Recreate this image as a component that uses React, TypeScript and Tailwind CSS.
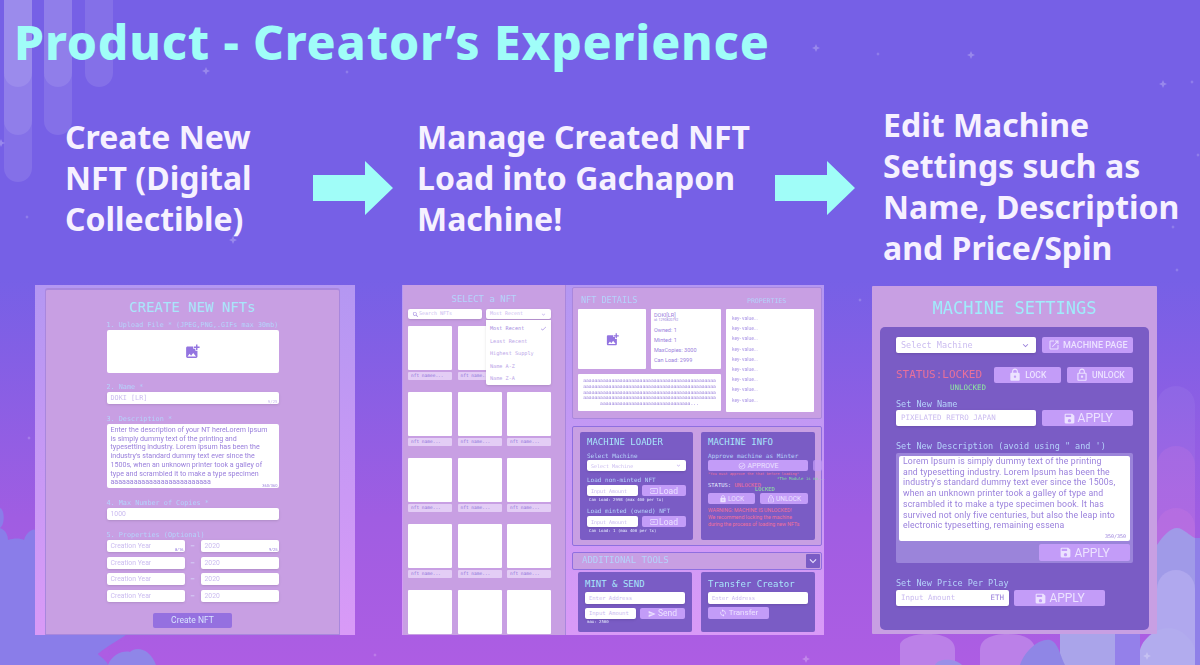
import type { ReactNode } from "react";
import {
  MdAddPhotoAlternate,
  MdCheck,
  MdInput,
  MdKeyboardArrowDown,
  MdLock,
  MdLockOutline,
  MdOutlineCheckCircle,
  MdOutlineOpenInNew,
  MdSave,
  MdSearch,
  MdSend,
  MdSync,
} from "react-icons/md";

const stars: [number, number, number][] = [
  [206, 71, 4], [233, 240, 4], [27, 217, 2], [1, 143, 4], [816, 48, 4], [878, 54, 2],
  [971, 55, 4], [1163, 84, 4], [1192, 82, 2], [1198, 155, 2], [1173, 227, 2], [347, 72, 2],
  [1147, 656, 4], [806, 659, 4], [375, 655, 2], [1177, 270, 2], [860, 300, 2], [29, 438, 2],
];

function Backdrop() {
  return (
    <svg className="absolute inset-0" width="1200" height="665" viewBox="0 0 1200 665">
      <defs>
        <linearGradient id="sky" x1="0" y1="0" x2="0" y2="1">
          <stop offset="0.42" stopColor="#7660e6" />
          <stop offset="0.78" stopColor="#a05de2" />
          <stop offset="1" stopColor="#ad5de3" />
        </linearGradient>
      </defs>
      <rect width="1200" height="665" fill="url(#sky)" />
      <g fill="#ffffff" fillOpacity="0.1">
        <rect x="4" y="-30" width="28" height="117" rx="14" />
        <rect x="4" y="-30" width="28" height="165" rx="14" />
        <rect x="4" y="-30" width="28" height="212" rx="14" />
        <rect x="44" y="-30" width="28" height="117" rx="14" />
        <rect x="44" y="-30" width="28" height="165" rx="14" />
        <rect x="85" y="-30" width="28" height="117" rx="14" />
      </g>
      {/* left cloud */}
      <path
        d="M0 508C5 510 5 525 0 528C6 530 8 536 8 540C14 538 20 538 24 540C26 532 34 528 35 530V635H126C120 640 108 645 98 654C104 660 106 660 108 665H0Z"
        fill="#8a7de9"
      />
      <path d="M98 654L126 635L124 640C112 640 106 650 110 655C104 658 102 658 98 654Z" fill="#ad5de3" />
      <path d="M108 665C112 654 124 650 130 652C136 646 150 648 156 665Z" fill="#8f86e8" />
      {/* right columns */}
      <rect x="1157" y="386" width="38" height="300" rx="19" fill="#ffffff" fillOpacity="0.05" />
      <rect x="1157" y="446" width="38" height="240" rx="19" fill="#d07ce0" fillOpacity="0.2" />
      <rect x="1157" y="508" width="38" height="180" rx="19" fill="#d07ce0" fillOpacity="0.25" />
      <path d="M1157 545C1163 536 1170 528 1177 528C1183 528 1190 536 1195 538H1200V665H1157Z" fill="#a09ae8" />
      <rect x="1195" y="538" width="5" height="127" fill="#8f80e8" />
      <rect x="1157" y="570" width="38" height="120" rx="19" fill="#b0a8ee" />
      <rect x="1115" y="634" width="25" height="31" fill="#9480ea" />
      <path d="M1140 665V650C1142 640 1155 628 1168 628C1182 628 1193 640 1195 650V665Z" fill="#b2acee" />
      <path d="M900 665V645C900 640 910 634 928 634C945 634 955 640 955 650V665Z" fill="#bb80e8" />
      <path d="M980 665V650C980 640 990 634 1008 634C1025 634 1035 640 1035 650V665Z" fill="#bb80e8" />
      <path d="M1060 665V634H1115V665Z" fill="#aaa4ea" />
      <path d="M1020 665C1025 650 1040 638 1050 640C1058 642 1060 655 1065 665Z" fill="#8f86e6" />
      <path d="M935 665C938 658 955 658 962 665Z" fill="#9a90e8" />
      {stars.map(([x, y, r]) => (
        <path
          key={`${x}-${y}`}
          d={`M${x} ${y - r}L${x + r * 0.3} ${y - r * 0.3}L${x + r} ${y}L${x + r * 0.3} ${y + r * 0.3}L${x} ${y + r}L${x - r * 0.3} ${y + r * 0.3}L${x - r} ${y}L${x - r * 0.3} ${y - r * 0.3}Z`}
          fill="#ffffff"
          fillOpacity="0.25"
        />
      ))}
    </svg>
  );
}

function Arrow() {
  return (
    <svg width="80" height="54" viewBox="0 0 80 54" className="shrink-0">
      <path d="M0 14H52V0L80 27L52 54V40H0Z" fill="#a0fdf8" />
    </svg>
  );
}

function Field({ children, className = "" }: { children?: ReactNode; className?: string }) {
  return (
    <div className={`flex items-center whitespace-nowrap rounded-[2px] bg-white px-[4px] text-[#cbbcf0] shadow-sm ${className}`}>
      {children}
    </div>
  );
}

function Action({ children, className = "" }: { children: ReactNode; className?: string }) {
  return (
    <div className={`flex items-center justify-center whitespace-nowrap rounded-[2px] bg-[#c39cf8] font-['Roboto',sans-serif] text-[#ece2ff] ${className}`}>
      {children}
    </div>
  );
}

function NftCell({ name }: { name?: string }) {
  return (
    <div className="w-[44px]">
      <div className="h-[44px] rounded-[1px] bg-white" />
      {name && (
        <div className="mt-[2px] h-[8px] truncate rounded-[1px] bg-[#e3cdf5] pl-[3px] text-[4.5px] leading-[8px] text-[#8d72da]">
          {name}
        </div>
      )}
    </div>
  );
}

function CreatePanel() {
  const rows = ["8/16", "", "", ""];
  return (
    <div className="h-[350px] w-[320px] bg-gradient-to-b from-[#b497f2] to-[#d99af7] pl-[10px] pr-[15px] pt-[3px]">
      <div className="flex h-[347px] flex-col items-center rounded-t-[3px] border-x border-b border-t-2 border-[#a987dd] bg-[#c89fe3] pt-[9px] font-['DejaVu_Sans_Mono',monospace] text-[#b5d3fb]">
        <div className="text-[14px] leading-[16px] text-[#a8e6fb]">CREATE NEW NFTs</div>
        <div className="w-[172px] text-[6.8px] leading-[8px]">
          <div className="mt-[6px]">1. Upload File * (JPEG,PNG,.GIFs max 30mb)</div>
          <div className="mt-[1px] flex h-[43px] items-center justify-center rounded-[2px] bg-white">
            <MdAddPhotoAlternate className="size-[17px] text-[#9374e0]" />
          </div>
          <div className="mt-[10px]">2. Name *</div>
          <Field className="relative mt-[1px] h-[12px] text-[#9074dd]">
            DOKI [LR]
            <span className="absolute bottom-0 right-[1px] text-[4px] leading-[5px]">9/25</span>
          </Field>
          <div className="mt-[11px]">3. Description *</div>
          <div className="relative mt-[1px] h-[64px] whitespace-pre-line rounded-[2px] bg-white px-[4px] pt-[2px] font-['Roboto',sans-serif] text-[7.1px] leading-[8.7px] text-[#9a80dc]">
            {"Enter the description of your NT hereLorem Ipsum\nis simply dummy text of the printing and\ntypesetting industry. Lorem Ipsum has been the\nindustry's standard dummy text ever since the\n1500s, when an unknown printer took a galley of\ntype and scrambled it to make a type specimen\naaaaaaaaaaaaaaaaaaaaaaaaaa"}
            <span className="absolute bottom-0 right-[1px] text-[4px] leading-[5px]">360/360</span>
          </div>
          <div className="mt-[11px]">4. Max Number of Copies *</div>
          <Field className="mt-[1px] h-[12px] font-['Roboto',sans-serif] text-[#9074dd]">1000</Field>
          <div className="mt-[11px]">5. Properties (Optional)</div>
          <div className="mt-[1px] flex flex-col gap-[4.5px]">
            {rows.map((count, i) => (
              <div key={i} className="flex h-[12px] items-center">
                <Field className="relative h-full w-[78px] font-['Roboto',sans-serif]">
                  Creation Year
                  <span className="absolute bottom-0 right-[1px] text-[4px] leading-[5px] text-[#9074dd]">{count}</span>
                </Field>
                <span className="w-[16px] text-center text-[#d9e6ff]">−</span>
                <Field className="relative h-full w-[78px] font-['Roboto',sans-serif]">
                  2020
                  <span className="absolute bottom-0 right-[1px] text-[4px] leading-[5px] text-[#9074dd]">{count ? "9/25" : ""}</span>
                </Field>
              </div>
            ))}
          </div>
        </div>
        <div className="mt-[11px] flex h-[15px] w-[79px] items-center justify-center rounded-[2px] bg-[#9570e0] font-['Roboto',sans-serif] text-[8.5px] text-[#d8e4ff]">
          Create NFT
        </div>
      </div>
    </div>
  );
}

const sortOptions = ["Least Recent", "Highest Supply", "Name A-Z", "Name Z-A"];

function nftLabel(i: number) {
  if (i >= 12 || i === 2) return undefined; // last row is cut off, third cell sits under the menu
  return i === 0 ? "nft namee..." : "nft name...";
}

function SelectNft() {
  return (
    <div className="relative h-[350px] w-[163px] shrink-0 border-r border-[#a987dd] bg-[#c89fe3] px-[5px] pt-[9px] font-['DejaVu_Sans_Mono',monospace]">
      <div className="text-center text-[9px] leading-[11px] text-[#b5d3fb]">SELECT a NFT</div>
      <div className="mt-[4px] flex gap-[4px] text-[5px] text-[#a58ce0]">
        <Field className="h-[10px] w-[74px] px-[2px]">
          <MdSearch className="size-[7px] text-[#9a80dc]" />
          Search NFTs
        </Field>
        <Field className="h-[10px] w-[65px] justify-between text-[#a58ce0]">
          Most Recent
          <MdKeyboardArrowDown className="size-[7px]" />
        </Field>
      </div>
      <div className="mt-[7px] grid grid-cols-[44px_44px_44px] gap-x-[5.5px] gap-y-[12px]">
        {Array.from({ length: 15 }, (_, i) => (
          <NftCell key={i} name={nftLabel(i)} />
        ))}
      </div>
      {/* open sort menu sits over the grid */}
      <div className="absolute left-[83px] top-[35px] h-[65px] w-[65px] rounded-b-[2px] bg-white px-[4px] pt-[2px] text-[5.2px] leading-[12.5px] text-[#bba6e8] shadow-sm">
        <div className="flex items-center justify-between text-[#a58ce0]">
          Most Recent
          <MdCheck className="size-[7px]" />
        </div>
        {sortOptions.map((option) => (
          <div key={option}>{option}</div>
        ))}
      </div>
    </div>
  );
}

function NftDetails() {
  return (
    <div className="flex h-[132px] gap-[5px] rounded-[2px] border border-[#a987dd] bg-[#c89fe3] pl-[5px] pt-[5px]">
      <div className="w-[143px]">
        <div className="h-[16px] pl-[3px] text-[8.5px] leading-[14px] text-[#b5d3fb]">NFT DETAILS</div>
        <div className="flex gap-[5px]">
          <div className="flex h-[60px] w-[68px] items-center justify-center rounded-[1px] bg-white">
            <MdAddPhotoAlternate className="size-[15px] text-[#9374e0]" />
          </div>
          <div className="h-[60px] w-[70px] rounded-[1px] bg-white px-[3px] pt-[3px] font-['Roboto',sans-serif] text-[5.5px] leading-[10px] text-[#9a80dc]">
            <div className="leading-[6px]">DOKI[LR]</div>
            <div className="text-[3.5px] leading-[4px]">id: 1290820792</div>
            <div className="mt-[3px]">Owned: 1</div>
            <div>Minted: 1</div>
            <div>MaxCopies: 3000</div>
            <div>Can Load: 2999</div>
          </div>
        </div>
        <div className="mt-[5px] h-[37px] overflow-hidden break-all rounded-[1px] bg-white px-[5px] pt-[4px] text-center text-[4.7px] leading-[5.8px] text-[#9a80dc]">
          {"a".repeat(220)}...
        </div>
      </div>
      <div className="w-[88px]">
        <div className="h-[16px] pl-[21px] pt-[3px] text-[6.5px] leading-[10px] text-[#b5d3fb]">PROPERTIES</div>
        <div className="h-[103px] rounded-[1px] bg-white pl-[6px] pt-[4px] font-['Roboto',sans-serif] text-[5px] leading-[10.2px] text-[#ad98e6]">
          {Array.from({ length: 9 }, (_, i) => (
            <div key={i}>key- value...</div>
          ))}
        </div>
      </div>
    </div>
  );
}

function MachineTools() {
  return (
    <div className="mt-[7px] flex h-[120px] gap-[8px] rounded-[2px] border border-[#8f6fe0] bg-[#c89fe3] pl-[7px] pt-[5px]">
      <div className="h-[108px] w-[113px] rounded-[2px] bg-[#7a5cc5] px-[7px] pt-[4px] text-[6px] leading-[8px] text-[#b5d3fb]">
        <div className="text-[9px] leading-[12px] text-[#a8e6fb]">MACHINE LOADER</div>
        <div className="mt-[4px]">Select Machine</div>
        <Field className="h-[11px] justify-between text-[5px] text-[#b5a0e8]">
          Select Machine
          <MdKeyboardArrowDown className="size-[7px]" />
        </Field>
        <div className="mt-[5px]">Load non-minted NFT</div>
        <div className="mt-[1px] flex gap-[4px]">
          <Field className="h-[11px] w-[51px] text-[5px] text-[#b5a0e8]">Input Amount</Field>
          <Action className="h-[11px] w-[44px] gap-[1px] text-[8.5px]">
            <MdInput className="size-[8px]" />
            Load
          </Action>
        </div>
        <div className="mt-[1px] pl-[2px] text-[4px] leading-[6px] text-[#e6eeff]">Can Load: 2998 (max 400 per tx)</div>
        <div className="mt-[4px]">Load minted (owned) NFT</div>
        <div className="mt-[1px] flex gap-[4px]">
          <Field className="h-[11px] w-[51px] text-[5px] text-[#b5a0e8]">Input Amount</Field>
          <Action className="h-[11px] w-[44px] gap-[1px] text-[8.5px]">
            <MdInput className="size-[8px]" />
            Load
          </Action>
        </div>
        <div className="mt-[1px] pl-[2px] text-[4px] leading-[6px] text-[#e6eeff]">Can Load: 1 (max 400 per tx)</div>
      </div>
      <div className="relative h-[108px] w-[114px] rounded-[2px] bg-[#7a5cc5] px-[7px] pt-[4px] text-[6px] leading-[8px] text-[#b5d3fb]">
        <div className="text-[9px] leading-[12px] text-[#a8e6fb]">MACHINE INFO</div>
        <div className="mt-[4px]">Approve machine as Minter</div>
        <Action className="h-[11px] w-[100px] gap-[2px] text-[7px]">
          <MdOutlineCheckCircle className="size-[8px]" />
          APPROVE
        </Action>
        <div className="mt-[1px] whitespace-nowrap text-[3.6px] leading-[5px] text-[#ee6f9a]">*You must approve the that before loading*</div>
        <div className="mt-[4px] text-[5.5px] text-[#e6eeff]">
          STATUS: <span className="text-[#ee6f9a]">UNLOCKED</span>
        </div>
        <div className="mt-[4px] flex gap-[5px]">
          <Action className="h-[11px] w-[47px] gap-[1px] text-[6.5px]">
            <MdLock className="size-[8px]" />
            LOCK
          </Action>
          <Action className="h-[11px] w-[48px] gap-[1px] bg-[#a79ad8] text-[6.5px]">
            <MdLockOutline className="size-[8px]" />
            UNLOCK
          </Action>
        </div>
        <div className="mt-[3px] w-[100px] font-['Roboto',sans-serif] text-[5.2px] leading-[7px] text-[#f0709a]">
          WARNING: MACHINE IS UNLOCKED!
          <br />
          We recommend locking the machine
          <br />
          during the process of loading new NFTs
        </div>
        {/* stray bits of the original capture that hang over the card edge */}
        <div className="absolute left-[112px] top-[28px] h-[11px] w-[9px] rounded-[2px] bg-[#c39cf8]/70" />
        <div className="absolute left-[76px] top-[44px] whitespace-nowrap text-[4px] leading-[5px] text-[#7de0a0]">*The Module is no...</div>
        <div className="absolute left-[54px] top-[54px] text-[5.5px] leading-[6px] text-[#8de8a0]">LOCKED</div>
      </div>
    </div>
  );
}

function AdditionalTools() {
  return (
    <>
      <div className="mt-[6px] flex h-[18px] items-center justify-between rounded-[2px] border border-[#8f6fe0] bg-[#c89fe3] pl-[9px] pr-[1px] text-[9px] text-[#b5d3fb]">
        ADDITIONAL TOOLS
        <div className="flex size-[14px] items-center justify-center rounded-[1px] bg-[#7a5cc5]">
          <MdKeyboardArrowDown className="size-[14px] text-[#e9e2ff]" />
        </div>
      </div>
      <div className="mt-[2px] flex gap-[9px] pl-[6px]">
        <div className="h-[60px] w-[114px] rounded-[2px] bg-[#7a5cc5] px-[7px] pt-[6px] text-[5.5px] text-[#b5a0e8]">
          <div className="text-[9px] leading-[12px] text-[#a8e6fb]">MINT &amp; SEND</div>
          <Field className="mt-[2px] h-[12px] w-[100px]">Enter Address</Field>
          <div className="mt-[4px] flex gap-[4px]">
            <Field className="h-[11px] w-[51px]">Input Amount</Field>
            <Action className="h-[11px] w-[45px] gap-[2px] text-[8.5px]">
              <MdSend className="size-[8px]" />
              Send
            </Action>
          </div>
          <div className="pl-[2px] text-[4px] leading-[6px] text-[#e6eeff]">max: 2500</div>
        </div>
        <div className="h-[60px] w-[114px] rounded-[2px] bg-[#7a5cc5] px-[7px] pt-[6px] text-[5.5px] text-[#b5a0e8]">
          <div className="text-[9px] leading-[12px] text-[#a8e6fb]">Transfer Creator</div>
          <Field className="mt-[2px] h-[12px] w-[100px]">Enter Address</Field>
          <Action className="mt-[3px] h-[12px] w-[61px] gap-[2px] text-[8px]">
            <MdSync className="size-[8px]" />
            Transfer
          </Action>
        </div>
      </div>
    </>
  );
}

function ManagePanel() {
  return (
    <div className="flex h-[350px] w-[422px] bg-gradient-to-b from-[#b497f2] to-[#d99af7] pl-[1px] pr-[2px] font-['DejaVu_Sans_Mono',monospace]">
      <SelectNft />
      <div className="ml-[6px] w-[250px] pt-[2px]">
        <NftDetails />
        <MachineTools />
        <AdditionalTools />
      </div>
    </div>
  );
}

function SettingsPanel() {
  return (
    <div className="h-[348px] w-[285px] rounded-[1px] bg-[#c89fe3] px-[8px] pt-[12px] font-['DejaVu_Sans_Mono',monospace]">
      <div className="text-center text-[17px] leading-[20px] text-[#a0ecfb]">MACHINE SETTINGS</div>
      <div className="mt-[9px] h-[303px] rounded-[5px] bg-[#7a5cc5] px-[16px] pt-[10px] text-[8.5px] leading-[10px] text-[#b5d3fb]">
        <div className="flex gap-[6px]">
          <Field className="h-[16px] w-[141px] justify-between px-[5px] text-[#bba9ea]">
            Select Machine
            <MdKeyboardArrowDown className="size-[11px] text-[#9a80dc]" />
          </Field>
          <Action className="h-[16px] w-[91px] gap-[3px] text-[9px] font-medium">
            <MdOutlineOpenInNew className="size-[12px]" />
            MACHINE PAGE
          </Action>
        </div>
        <div className="relative mt-[14px] flex items-center gap-[14px]">
          <div className="w-[84px] whitespace-nowrap text-[11px] text-[#e9709a]">STATUS:LOCKED</div>
          <Action className="h-[16px] w-[67px] gap-[3px] bg-[#a79ad8] text-[8.5px] font-medium">
            <MdLock className="size-[14px]" />
            LOCK
          </Action>
          <Action className="-ml-[8px] h-[16px] w-[67px] gap-[3px] text-[8.5px] font-medium">
            <MdLockOutline className="size-[14px]" />
            UNLOCK
          </Action>
          <div className="absolute left-[54px] top-[16px] text-[7.5px] text-[#8de8a0]">UNLOCKED</div>
        </div>
        <div className="mt-[16px]">Set New Name</div>
        <div className="mt-[1px] flex gap-[6px]">
          <Field className="h-[16px] w-[141px] px-[5px] text-[7.5px] text-[#bba9ea]">PIXELATED RETRO JAPAN</Field>
          <Action className="h-[16px] w-[91px] gap-[2px] text-[12px]">
            <MdSave className="size-[13px]" />
            APPLY
          </Action>
        </div>
        <div className="mt-[15px]">Set New Description (avoid using " and ')</div>
        <div className="mt-[2px] h-[110px] rounded-[2px] bg-[#9b84da] px-[3px] pt-[3px]">
          <div className="relative h-[85px] whitespace-pre-line rounded-[2px] bg-white px-[4px] font-['Roboto',sans-serif] text-[8.7px] leading-[10.7px] tracking-[0.15px] text-[#9a80dc]">
            {"Lorem Ipsum is simply dummy text of the printing\nand typesetting industry. Lorem Ipsum has been the\nindustry's standard dummy text ever since the 1500s,\nwhen an unknown printer took a galley of type and\nscrambled it to make a type specimen book. It has\nsurvived not only five centuries, but also the leap into\nelectronic typesetting, remaining essena"}
            <span className="absolute bottom-[2px] right-[4px] font-['DejaVu_Sans_Mono',monospace] text-[5px] leading-[6px] tracking-normal">350/350</span>
          </div>
          <div className="mt-[3px] flex justify-end">
            <Action className="h-[17px] w-[91px] gap-[2px] text-[12px]">
              <MdSave className="size-[13px]" />
              APPLY
            </Action>
          </div>
        </div>
        <div className="mt-[15px]">Set New Price Per Play</div>
        <div className="mt-[2px] flex gap-[5px]">
          <Field className="h-[16px] w-[113px] justify-between px-[5px] text-[7.5px] text-[#bba9ea]">
            Input Amount
            <span className="text-[#9a80dc]">ETH</span>
          </Field>
          <Action className="h-[16px] w-[91px] gap-[2px] text-[12px]">
            <MdSave className="size-[13px]" />
            APPLY
          </Action>
        </div>
      </div>
    </div>
  );
}

export default function App() {
  return (
    <div className="relative h-[665px] w-[1200px] overflow-hidden font-['Noto_Sans',sans-serif]">
      <Backdrop />
      <div className="relative">
        <h1 className="whitespace-nowrap pl-[14px] pt-[12px] text-[48px] font-extrabold leading-[60px] tracking-[0.85px] text-[#a0fdf8]">
          Product - Creator’s Experience
        </h1>
        <div className="flex h-[213px] pl-[65px] text-[32px] font-bold leading-[41px] text-[#f6f1ff]">
          <div className="w-[248px] whitespace-pre-line pt-[44px]">{"Create New\nNFT (Digital\nCollectible)"}</div>
          <div className="mt-[89px] w-[104px]"><Arrow /></div>
          <div className="w-[358px] whitespace-pre-line pt-[44px]">{"Manage Created NFT\nLoad into Gachapon\nMachine!"}</div>
          <div className="mt-[89px] w-[108px]"><Arrow /></div>
          <div className="whitespace-pre-line pt-[32px]">{"Edit Machine\nSettings such as\nName, Description\nand Price/Spin"}</div>
        </div>
        <div className="flex items-start pl-[35px] blur-[0.4px]">
          <CreatePanel />
          <div className="ml-[47px]"><ManagePanel /></div>
          <div className="ml-[48px] mt-[1px]"><SettingsPanel /></div>
        </div>
      </div>
    </div>
  );
}
